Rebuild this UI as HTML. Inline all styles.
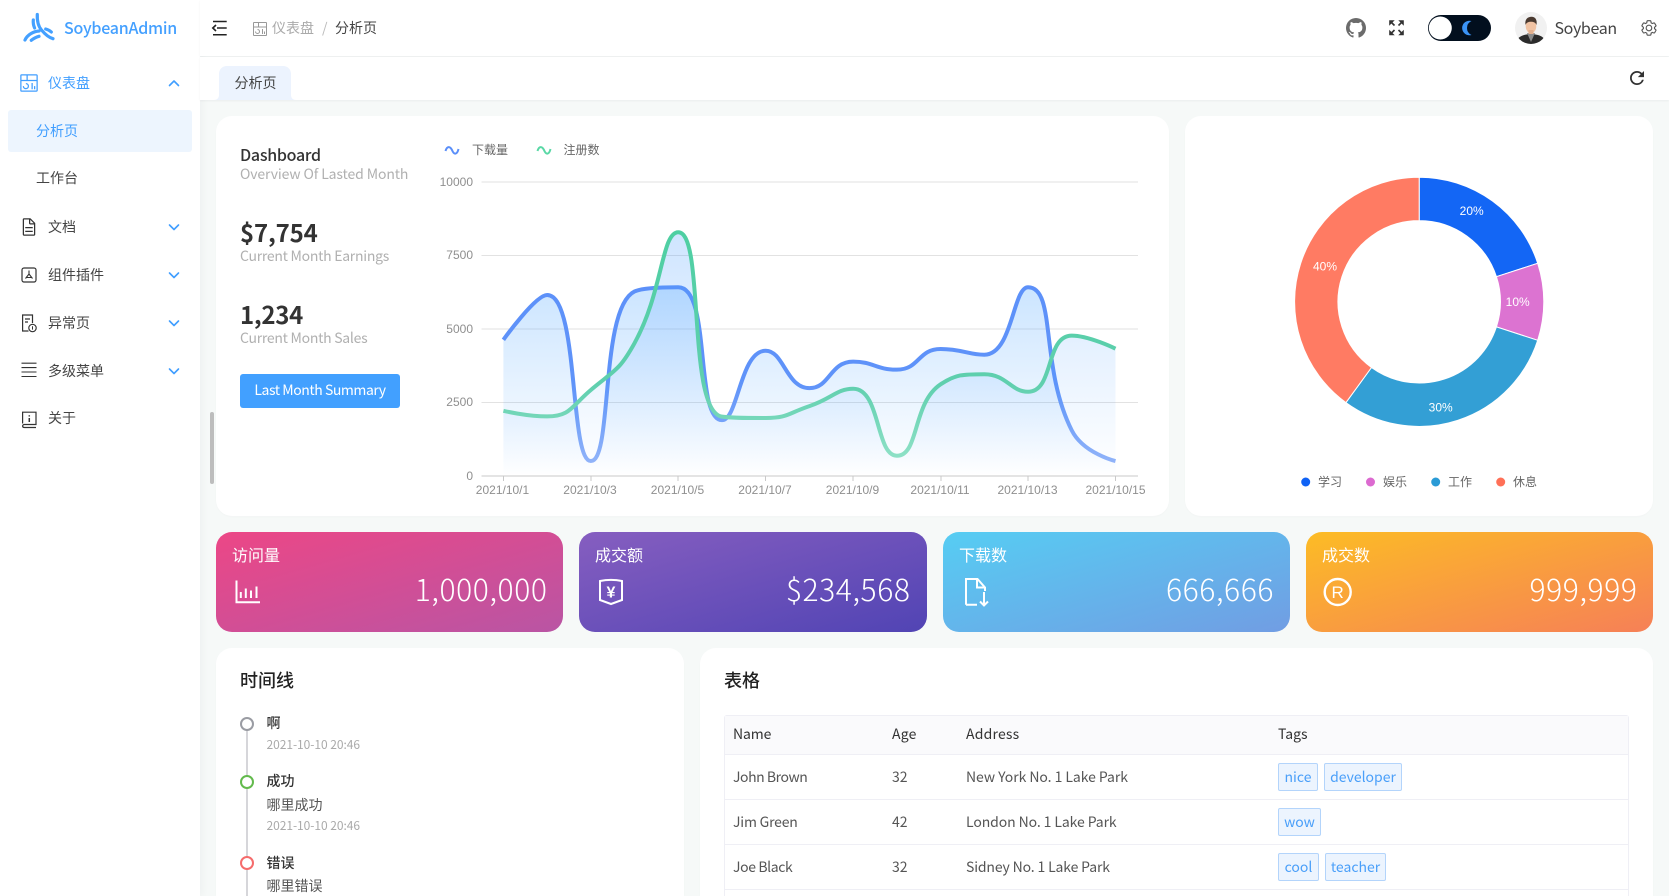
<!DOCTYPE html>
<html lang="zh">
<head>
<meta charset="utf-8">
<title>SoybeanAdmin</title>
<style>
html,body{margin:0;padding:0;width:1669px;height:896px;overflow:hidden;background:#f6f9f8}
body{font-family:"Noto Sans CJK SC","Liberation Sans",sans-serif;color:#333;font-size:14px;position:relative}
.b{position:absolute;box-sizing:border-box}
.t{position:absolute;white-space:nowrap;line-height:20px;height:20px}
.card{position:absolute;background:#fff;border-radius:16px;box-shadow:0 1px 2px rgba(0,0,0,.02)}
.stat{position:absolute;top:532px;height:100px;width:347.25px;border-radius:16px}
.sub{color:#b0b0b0}
.mi{color:#444}
.tag{position:absolute;box-sizing:border-box;height:28px;line-height:27px;text-align:center;background:#ecf4fe;border:1px solid #b3d4fb;border-radius:2px;color:#4a9ff9;font-size:14px}
svg.o{position:absolute;left:0;top:0;z-index:5}
.val{color:#fff;font-size:30px;font-weight:300;line-height:40px;height:40px;top:568px;letter-spacing:.6px}
.st{color:#fff;font-size:16px;top:544px}
.td{color:#555}
</style>
</head>
<body>
<!-- sidebar -->
<div class="b" style="left:0;top:0;width:200px;height:896px;background:#fff;box-shadow:2px 0 8px rgba(29,35,41,.04)"></div>
<div class="t" style="left:64px;top:17px;font-size:16px;font-weight:500;color:#44a0ff;letter-spacing:-.25px">SoybeanAdmin</div>
<div class="t" style="left:48px;top:73px;color:#409eff">仪表盘</div>
<div class="b" style="left:8px;top:110px;width:184px;height:42px;background:#edf5fe;border-radius:3px"></div>
<div class="t" style="left:36px;top:121px;color:#409eff">分析页</div>
<div class="t mi" style="left:36px;top:168px">工作台</div>
<div class="t mi" style="left:48px;top:217px">文档</div>
<div class="t mi" style="left:48px;top:265px">组件插件</div>
<div class="t mi" style="left:48px;top:313px">异常页</div>
<div class="t mi" style="left:48px;top:361px">多级菜单</div>
<div class="t mi" style="left:48px;top:408px">关于</div>
<div class="b" style="left:210px;top:412px;width:4px;height:72px;background:#bdbdbd;border-radius:2px;z-index:6"></div>

<!-- header -->
<div class="b" style="left:200px;top:0;width:1469px;height:56px;background:#fff;box-shadow:0 1px 2px rgba(0,21,41,.05)"></div>
<div class="t" style="left:272px;top:18px;color:#aaa">仪表盘</div>
<div class="t" style="left:322px;top:18px;color:#bbb">/</div>
<div class="t" style="left:335px;top:18px;color:#444">分析页</div>
<div class="t" style="left:1554.500px;top:17px;font-size:16px;color:#444;letter-spacing:-.36px">Soybean</div>

<!-- tabbar -->
<div class="b" style="left:200px;top:57px;width:1469px;height:43px;background:#fff;box-shadow:0 1px 2px rgba(0,21,41,.05)"></div>
<div class="t" style="left:234.500px;top:73px;color:#444;z-index:7">分析页</div>

<!-- main cards -->
<div class="card" style="left:216px;top:116px;width:953px;height:400px"></div>
<div class="card" style="left:1185px;top:116px;width:468px;height:400px"></div>
<div class="t" style="left:240px;top:144px;font-size:16px;font-weight:500;color:#333;letter-spacing:-.28px">Dashboard</div>
<div class="t sub" style="left:240px;top:164px;letter-spacing:-.12px">Overview Of Lasted Month</div>
<div class="t" style="left:240px;top:222px;font-size:24px;font-weight:700;color:#333;letter-spacing:-.17px">$7,754</div>
<div class="t sub" style="left:240px;top:246px;letter-spacing:-.27px">Current Month Earnings</div>
<div class="t" style="left:240px;top:304px;font-size:24px;font-weight:700;color:#333;letter-spacing:-.3px">1,234</div>
<div class="t sub" style="left:240px;top:328px;letter-spacing:-.27px">Current Month Sales</div>
<div class="b" style="left:240px;top:374px;width:160px;height:34px;background:#42a0ff;border-radius:3px;color:#fff;text-align:center;line-height:33px;letter-spacing:-.44px">Last Month Summary</div>

<!-- stat cards -->
<div class="stat" style="left:216px;background:linear-gradient(to bottom right,#ec4786,#b955a4)"></div>
<div class="stat" style="left:579.25px;background:linear-gradient(to bottom right,#865ec0,#5144b4)"></div>
<div class="stat" style="left:942.5px;background:linear-gradient(to bottom right,#56cdf3,#719de3)"></div>
<div class="stat" style="left:1305.75px;background:linear-gradient(to bottom right,#fcbc25,#f68057)"></div>
<div class="t st" style="left:232px">访问量</div>
<div class="t st" style="left:595px">成交额</div>
<div class="t st" style="left:959px">下载数</div>
<div class="t st" style="left:1322px">成交数</div>
<div class="t val" style="right:1121.500px">1,000,000</div>
<div class="t val" style="right:758.500px">$234,568</div>
<div class="t val" style="right:395px">666,666</div>
<div class="t val" style="right:31.500px">999,999</div>

<!-- timeline card -->
<div class="card" style="left:216px;top:648px;width:468px;height:248px;border-radius:16px 16px 0 0"></div>
<div class="t" style="left:240px;top:670px;font-size:18px;font-weight:500;color:#222">时间线</div>
<div class="b" style="left:246px;top:730px;width:2px;height:166px;background:#d6d6da"></div>
<div class="b" style="left:240px;top:717px;width:14px;height:14px;border-radius:50%;border:2px solid #9a9ca3;background:#fff"></div>
<div class="b" style="left:240px;top:775px;width:14px;height:14px;border-radius:50%;border:2px solid #63ba4d;background:#fff"></div>
<div class="b" style="left:240px;top:856px;width:14px;height:14px;border-radius:50%;border:2px solid #f56c6c;background:#fff"></div>
<div class="t" style="left:266.500px;top:713px;color:#333;font-weight:500">啊</div>
<div class="t" style="left:266.500px;top:735px;font-size:12px;color:#aaa;letter-spacing:-.05px">2021-10-10 20:46</div>
<div class="t" style="left:266.500px;top:771px;color:#333;font-weight:500">成功</div>
<div class="t" style="left:266.500px;top:795px;color:#555">哪里成功</div>
<div class="t" style="left:266.500px;top:816px;font-size:12px;color:#aaa;letter-spacing:-.05px">2021-10-10 20:46</div>
<div class="t" style="left:266.500px;top:853px;color:#333;font-weight:500">错误</div>
<div class="t" style="left:266.500px;top:876px;color:#555">哪里错误</div>

<!-- table card -->
<div class="card" style="left:700px;top:648px;width:953px;height:248px;border-radius:16px 16px 0 0"></div>
<div class="t" style="left:724px;top:670px;font-size:18px;font-weight:500;color:#222">表格</div>
<div class="b" style="left:724px;top:715px;width:905px;height:181px;border:1px solid #efeff5;border-bottom:0;border-radius:3px 3px 0 0"></div>
<div class="b" style="left:725px;top:716px;width:903px;height:38px;background:#fafafc"></div>
<div class="b" style="left:724px;top:754px;width:905px;height:1px;background:#efeff5"></div>
<div class="b" style="left:724px;top:799px;width:905px;height:1px;background:#efeff5"></div>
<div class="b" style="left:724px;top:844px;width:905px;height:1px;background:#efeff5"></div>
<div class="b" style="left:724px;top:889px;width:905px;height:1px;background:#efeff5"></div>
<div class="t" style="left:733px;top:724px;color:#333;letter-spacing:-.1px">Name</div>
<div class="t" style="left:892px;top:724px;color:#333;letter-spacing:.2px">Age</div>
<div class="t" style="left:966px;top:724px;color:#333;letter-spacing:.2px">Address</div>
<div class="t" style="left:1278px;top:724px;color:#333;letter-spacing:0">Tags</div>
<div class="t td" style="left:733px;top:767px;letter-spacing:-.45px">John Brown</div>
<div class="t td" style="left:892px;top:767px">32</div>
<div class="t td" style="left:966px;top:767px;letter-spacing:-.06px">New York No. 1 Lake Park</div>
<div class="t td" style="left:733px;top:812px;letter-spacing:-.2px">Jim Green</div>
<div class="t td" style="left:892px;top:812px">42</div>
<div class="t td" style="left:966px;top:812px;letter-spacing:-.1px">London No. 1 Lake Park</div>
<div class="t td" style="left:733px;top:857px;letter-spacing:-.38px">Joe Black</div>
<div class="t td" style="left:892px;top:857px">32</div>
<div class="t td" style="left:966px;top:857px;letter-spacing:-.15px">Sidney No. 1 Lake Park</div>
<div class="tag" style="left:1278px;top:763px;width:40px">nice</div>
<div class="tag" style="left:1324px;top:763px;width:78px">developer</div>
<div class="tag" style="left:1278px;top:808px;width:43px">wow</div>
<div class="tag" style="left:1278px;top:853px;width:41px">cool</div>
<div class="tag" style="left:1325px;top:853px;width:61px">teacher</div>

<!-- overlay svg: icons + charts -->
<svg class="o" width="1669" height="896" viewBox="0 0 1669 896" xmlns="http://www.w3.org/2000/svg">
<defs>
<clipPath id="chartclip"><rect x="430" y="130" width="715" height="380"/></clipPath>
<linearGradient id="a1" gradientUnits="userSpaceOnUse" x1="0" y1="287" x2="0" y2="476"><stop offset="0" stop-color="#409eff" stop-opacity=".27"/><stop offset="1" stop-color="#409eff" stop-opacity="0"/></linearGradient>
<linearGradient id="a2" gradientUnits="userSpaceOnUse" x1="0" y1="231" x2="0" y2="476"><stop offset="0" stop-color="#4b9dff" stop-opacity=".27"/><stop offset="1" stop-color="#4b9dff" stop-opacity="0"/></linearGradient>
<linearGradient id="l1" gradientUnits="userSpaceOnUse" x1="0" y1="232" x2="0" y2="476"><stop offset="0" stop-color="#5b8ff9"/><stop offset=".62" stop-color="#5f93f9"/><stop offset="1" stop-color="#9ab9f9"/></linearGradient>
<linearGradient id="l2" gradientUnits="userSpaceOnUse" x1="0" y1="232" x2="0" y2="476"><stop offset="0" stop-color="#4ecfa2"/><stop offset=".62" stop-color="#5fcfae"/><stop offset="1" stop-color="#99e5cc"/></linearGradient>
<clipPath id="av"><circle cx="1531" cy="28" r="16"/></clipPath>
</defs>

<!-- logo -->
<g fill="none" stroke="#44a0ff" stroke-width="3.2" stroke-linecap="round">
<path d="M37.300 14.500C37 21 38.500 26.500 41.500 30C44 33 48.500 37.500 53 38.700"/>
<path d="M39 31C33.500 31.500 27.500 34.500 25 40"/>
<path d="M33.300 20C33 23 33.500 25.500 34.600 28"/>
<path d="M45.700 29C47.500 29.500 49.700 30.500 51.300 32"/>
<path d="M31.300 40.300C33.500 38.500 36.500 37 39 36.300"/>
</g>

<!-- menu icons -->
<g fill="#409eff" transform="translate(19,73) scale(.625)"><path d="M24 21h2v5h-2zM20 16h2v10h-2zM11 26a5.006 5.006 0 0 1-5-5h2a3 3 0 1 0 3-3v-2a5 5 0 0 1 0 10z"/><path d="M28 2H4a2 2 0 0 0-2 2v24a2 2 0 0 0 2 2h24a2.003 2.003 0 0 0 2-2V4a2.002 2.002 0 0 0-2-2zm0 9H14V4h14zM12 4v7H4V4zM4 28V13h24l.002 15z"/></g>
<g fill="#999" transform="translate(252,21) scale(.5)"><path d="M24 21h2v5h-2zM20 16h2v10h-2zM11 26a5.006 5.006 0 0 1-5-5h2a3 3 0 1 0 3-3v-2a5 5 0 0 1 0 10z"/><path d="M28 2H4a2 2 0 0 0-2 2v24a2 2 0 0 0 2 2h24a2.003 2.003 0 0 0 2-2V4a2.002 2.002 0 0 0-2-2zm0 9H14V4h14zM12 4v7H4V4zM4 28V13h24l.002 15z"/></g>
<g fill="#333" transform="translate(19,217) scale(.625)"><path d="M25.700 9.300l-7-7A.908.908 0 0 0 18 2H8a2.006 2.006 0 0 0-2 2v24a2.006 2.006 0 0 0 2 2h16a2.006 2.006 0 0 0 2-2V10a.908.908 0 0 0-.3-.7zM18 4.400l5.600 5.600H18zM24 28H8V4h8v6a2.006 2.006 0 0 0 2 2h6z"/><path d="M10 22h12v2H10zM10 16h12v2H10z"/></g>
<g fill="none" stroke="#333" stroke-width="1.200">
<rect x="22" y="268" width="14" height="14" rx="2"/>
<path d="M29 270.500L29 274M29 274L25.500 278.500M29 274L32.500 278.500M26 277.500H32" stroke-width="1.100"/>
<path d="M32.500 323V315H22.600V331H28.500"/>
<path d="M25 319H30M25 322H28"/>
<circle cx="32.500" cy="328" r="3.700"/>
<path d="M32.500 326.300V329.600" stroke-width="1"/>
<path d="M21.500 363.200H36.500M21.500 367.600H36.500M21.500 372H36.500M21.500 376.500H36.500" stroke-width="1.100"/>
<path d="M22.600 423.500V412.200H36V424.500H24.400C23.400 424.500 22.600 425.200 22.600 426C22.600 427 23.400 427.500 24.400 427.500H36"/>
<path d="M29.300 415.300V416.500M29.300 418V422" stroke-width="1.500"/>
</g>
<g fill="none" stroke="#409eff" stroke-width="1.600" stroke-linecap="round" stroke-linejoin="round">
<path d="M169.500 85.500L174 81L178.500 85.500"/>
<path d="M169.500 225L174 229.500L178.500 225"/>
<path d="M169.500 273L174 277.500L178.500 273"/>
<path d="M169.500 321L174 325.500L178.500 321"/>
<path d="M169.500 369L174 373.500L178.500 369"/>
</g>

<!-- hamburger -->
<g stroke="#222" stroke-width="1.500" fill="none">
<path d="M213 21.500H226.700M217 28H226.700M213 34.700H226.700"/>
<path d="M216 25L212.800 28L216 31" stroke-width="1.600"/>
</g>

<!-- github -->
<path fill="#6b6b6b" transform="translate(1344,16)" d="M12 2A10 10 0 0 0 2 12c0 4.420 2.870 8.170 6.840 9.500c.5.080.66-.23.66-.5v-1.690c-2.770.6-3.360-1.340-3.360-1.340c-.46-1.160-1.110-1.470-1.110-1.470c-.91-.62.070-.6.070-.6c1 .07 1.530 1.030 1.530 1.030c.87 1.520 2.340 1.070 2.910.83c.09-.65.35-1.090.63-1.340c-2.220-.25-4.550-1.110-4.550-4.920c0-1.110.38-2 1.030-2.710c-.1-.25-.45-1.290.1-2.640c0 0 .84-.27 2.750 1.020c.79-.22 1.650-.33 2.500-.33c.85 0 1.710.11 2.500.33c1.910-1.290 2.750-1.020 2.750-1.020c.55 1.350.2 2.390.1 2.640c.65.71 1.030 1.600 1.030 2.710c0 3.820-2.340 4.660-4.570 4.910c.36.31.69.92.69 1.850V21c0 .27.16.59.67.5C19.140 20.160 22 16.420 22 12A10 10 0 0 0 12 2z"/>

<!-- fullscreen -->
<g fill="#333" stroke="#333" stroke-width=".6">
<path d="M1389.500 20.500H1394L1389.500 25Z"/><path d="M1391 22L1394.500 25.500" stroke-width="1.600"/>
<path d="M1403.500 20.500H1399L1403.500 25Z"/><path d="M1402 22L1398.500 25.500" stroke-width="1.600"/>
<path d="M1389.500 35H1394L1389.500 30.500Z"/><path d="M1391 33.500L1394.500 30" stroke-width="1.600"/>
<path d="M1403.500 35H1399L1403.500 30.500Z"/><path d="M1402 33.500L1398.500 30" stroke-width="1.600"/>
</g>

<!-- switch -->
<rect x="1428" y="15" width="63" height="26" rx="13" fill="#020f1e"/>
<circle cx="1440.300" cy="28" r="11.500" fill="#fff"/>
<path fill="#3b93f5" d="M1471.500 21A7.300 7.300 0 1 0 1471.500 35A7.700 7.700 0 0 1 1471.500 21Z"/>

<!-- avatar -->
<circle cx="1531" cy="28" r="16" fill="#f1f1f1"/>
<g clip-path="url(#av)">
<path d="M1515 46C1516 37 1522 34.500 1531 34C1540 34.500 1546 37 1547 46Z" fill="#2b2b2b"/>
<path d="M1527 33L1531 42L1535 33Z" fill="#8b8b8b"/>
<ellipse cx="1531" cy="26" rx="5.300" ry="7.200" fill="#f1c3a3"/>
<rect x="1528.500" y="30" width="5" height="4" fill="#e3b08e"/>
<path d="M1525.500 25C1524.500 19 1528 16.800 1531.500 16.800C1535 16.800 1537.500 19.500 1536.500 25C1535.500 22.500 1533.500 21.800 1531 21.800C1528.500 21.800 1526.500 22.500 1525.500 25Z" fill="#4a3a30"/>
</g>

<!-- gear -->
<g fill="#555" transform="translate(1640,19) scale(.56)"><path d="M27 16.760v-1.530l1.920-1.680A2 2 0 0 0 29.300 11l-2.360-4a2 2 0 0 0-1.730-1a2 2 0 0 0-.64.1l-2.430.82a11.350 11.350 0 0 0-1.310-.75l-.51-2.520a2 2 0 0 0-2-1.610h-4.680a2 2 0 0 0-2 1.610l-.51 2.520a11.480 11.480 0 0 0-1.320.75l-2.380-.86A2 2 0 0 0 6.790 6a2 2 0 0 0-1.730 1L2.700 11a2 2 0 0 0 .41 2.510L5 15.240v1.530l-1.890 1.680A2 2 0 0 0 2.700 21l2.360 4a2 2 0 0 0 1.730 1a2 2 0 0 0 .64-.1l2.430-.82a11.350 11.350 0 0 0 1.310.75l.51 2.520a2 2 0 0 0 2 1.610h4.720a2 2 0 0 0 2-1.610l.51-2.520a11.480 11.480 0 0 0 1.320-.75l2.420.82a2 2 0 0 0 .64.1a2 2 0 0 0 1.730-1l2.280-4a2 2 0 0 0-.41-2.510zM25.210 24l-3.430-1.160a8.860 8.860 0 0 1-2.710 1.570L18.360 28h-4.720l-.71-3.550a9.360 9.360 0 0 1-2.700-1.570L6.790 24l-2.360-4l2.720-2.400a8.900 8.900 0 0 1 0-3.130L4.430 12l2.360-4l3.430 1.160a8.860 8.860 0 0 1 2.710-1.570L13.640 4h4.720l.71 3.550a9.360 9.360 0 0 1 2.700 1.570L25.210 8l2.360 4l-2.720 2.400a8.900 8.900 0 0 1 0 3.130L27.570 20z"/><path d="M16 22a6 6 0 1 1 6-6a5.940 5.940 0 0 1-6 6zm0-10a3.910 3.910 0 0 0-4 4a3.910 3.910 0 0 0 4 4a3.910 3.910 0 0 0 4-4a3.910 3.910 0 0 0-4-4z"/></g>

<!-- refresh -->
<path fill="#333" transform="translate(1626.500,67.500) scale(.875)" d="M17.650 6.350A7.958 7.958 0 0 0 12 4a8 8 0 0 0-8 8a8 8 0 0 0 8 8c3.730 0 6.840-2.550 7.730-6h-2.080A5.990 5.990 0 0 1 12 18a6 6 0 0 1-6-6a6 6 0 0 1 6-6c1.660 0 3.140.69 4.220 1.780L13 11h7V4l-2.350 2.350z"/>

<!-- tab shape -->
<path fill="#ecf3fe" d="M214 100C217 100 219 98 219 95V74C219 69.500 222 66 227 66H283C288 66 291 69.500 291 74V95C291 98 293 100 296 100Z"/>

<!-- line chart -->
<g stroke="#e2e2e2" stroke-width="1">
<path d="M481.500 182H1138M481.500 255.500H1138M481.500 329H1138M481.500 402.500H1138"/>
</g>
<path d="M481.500 476H1138" stroke="#c9c9c9" stroke-width="1"/>
<g stroke="#c9c9c9" stroke-width="1">
<path d="M503.500 476v5M591 476v5M678 476v5M765.500 476v5M853 476v5M941 476v5M1028 476v5M1115.500 476v5"/>
</g>
<g font-family="'Liberation Sans',sans-serif" font-size="12" fill="#8f8f8f">
<g text-anchor="end">
<text x="473" y="186">10000</text>
<text x="473" y="259">7500</text>
<text x="473" y="333">5000</text>
<text x="473" y="406">2500</text>
<text x="473" y="480">0</text>
</g>
<g text-anchor="middle" clip-path="url(#chartclip)">
<text x="502.500" y="494">2021/10/1</text>
<text x="590" y="494">2021/10/3</text>
<text x="677.500" y="494">2021/10/5</text>
<text x="765" y="494">2021/10/7</text>
<text x="852.500" y="494">2021/10/9</text>
<text x="940" y="494">2021/10/11</text>
<text x="1027.500" y="494">2021/10/13</text>
<text x="1115.500" y="494">2021/10/15</text>
</g>
</g>
<path id="area1" fill="url(#a1)"/>
<path id="line1" fill="none" stroke="url(#l1)" stroke-width="4" stroke-linejoin="round"/>
<path id="area2" fill="url(#a2)"/>
<path id="line2" fill="none" stroke="url(#l2)" stroke-width="4" stroke-linejoin="round"/>

<!-- chart legend -->
<path d="M445.500 151C447 146 450 146 452 150C454 155 457 155 458.500 149" fill="none" stroke="#5b8ff9" stroke-width="2"/>
<path d="M537.500 151C539 146 542 146 544 150C546 155 549 155 550.500 149" fill="none" stroke="#5ad8a6" stroke-width="2"/>
<g font-family="'Noto Sans CJK SC','Liberation Sans',sans-serif" font-size="12" fill="#666">
<text x="472" y="154">下载量</text>
<text x="563.500" y="154">注册数</text>
</g>

<!-- donut -->
<g stroke="#fff" stroke-width="1">
<path fill="#1366f5" d="M1419.200 177.200A124.600 124.600 0 0 1 1537.700 263.300L1496.430 276.710A81.200 81.200 0 0 0 1419.200 220.600Z"/>
<path fill="#dc73d1" d="M1537.700 263.300A124.600 124.600 0 0 1 1537.700 340.300L1496.430 326.890A81.200 81.200 0 0 0 1496.430 276.710Z"/>
<path fill="#339fd5" d="M1537.700 340.300A124.600 124.600 0 0 1 1345.960 402.600L1371.470 367.490A81.200 81.200 0 0 0 1496.430 326.890Z"/>
<path fill="#ff7b63" d="M1345.960 402.600A124.600 124.600 0 0 1 1419.200 177.200L1419.200 220.600A81.200 81.200 0 0 0 1371.470 367.490Z"/>
</g>
<g font-family="'Liberation Sans',sans-serif" font-size="12" fill="#fff" text-anchor="middle">
<text x="1471.700" y="215">20%</text>
<text x="1517.700" y="306">10%</text>
<text x="1440.700" y="411.500">30%</text>
<text x="1325" y="270.500">40%</text>
</g>
<circle cx="1305.700" cy="482" r="4.500" fill="#0f62f5"/>
<circle cx="1370.500" cy="482" r="4.500" fill="#dc6ad0"/>
<circle cx="1435.700" cy="482" r="4.500" fill="#2a9bd6"/>
<circle cx="1500.700" cy="482" r="4.500" fill="#ff7057"/>
<g font-family="'Noto Sans CJK SC','Liberation Sans',sans-serif" font-size="12" fill="#666">
<text x="1318" y="486">学习</text>
<text x="1383" y="486">娱乐</text>
<text x="1448" y="486">工作</text>
<text x="1513" y="486">休息</text>
</g>

<!-- stat icons -->
<g fill="none" stroke="#fff" stroke-width="2">
<path d="M236.500 580.500V602.300H260"/>
<path d="M240.800 598V592M245.800 598V588.500M251 598V590.500M256.500 598V586.500" stroke-width="2"/>
<path d="M600 581C607 579.500 615 579.500 622 581V600L611 604L600 600Z" stroke-width="2"/>
<path d="M966 604.800V579H977.500L985 587.500V591M977 579V587.500H985M966 604.800H977" stroke-width="2"/>
<path d="M984 592V605M980 601.500L984 605.500L988 601.500" stroke-width="2"/>
<circle cx="1337.700" cy="592" r="13" stroke-width="2.400"/>
</g>
<g font-family="'Liberation Sans',sans-serif" fill="#fff" text-anchor="middle">
<text x="611" y="597.500" font-size="16" font-weight="700">¥</text>
<text x="1337.700" y="598" font-size="17">R</text>
</g>
</svg>

<script>
(function(){
var ds=[[4623,6145,498,6268,6411,1890,4251,2978,3880,3606,4311,4116,6411,1543,498],
        [2208,2016,2916,4512,8281,2008,1963,2367,2956,678,3108,3452,2856,4765,4319]];
var X0=503.4,DX=43.72,Y0=475.7,K=0.02940,S=0.5;
function build(d){
  var p=d.map(function(v,i){return [X0+i*DX,Y0-v*K]});
  var n=p.length,s='M'+p[0][0].toFixed(2)+' '+p[0][1].toFixed(2);
  var cx0=p[0][0],cy0=p[0][1];
  for(var i=1;i<n;i++){
    var x=p[i][0],y=p[i][1],px=p[i-1][0],py=p[i-1][1];
    var nx=i+1<n?p[i+1][0]:x,ny=i+1<n?p[i+1][1]:y;
    var cx1,cy1,ncx,ncy;
    if(i+1<n){
      var vx=nx-px,vy=ny-py;
      var dx0=x-px,dx1=nx-x,dy0=y-py,dy1=ny-y;
      var l0=Math.sqrt(dx0*dx0+dy0*dy0),l1=Math.sqrt(dx1*dx1+dy1*dy1);
      var r=l1/(l1+l0);
      ncx=x+vx*S*r;ncy=y+vy*S*r;
      ncx=Math.min(ncx,Math.max(nx,x));ncy=Math.min(ncy,Math.max(ny,y));
      ncx=Math.max(ncx,Math.min(nx,x));ncy=Math.max(ncy,Math.min(ny,y));
      vx=ncx-x;vy=ncy-y;
      cx1=x-vx*l0/l1;cy1=y-vy*l0/l1;
      cx1=Math.min(cx1,Math.max(px,x));cy1=Math.min(cy1,Math.max(py,y));
      cx1=Math.max(cx1,Math.min(px,x));cy1=Math.max(cy1,Math.min(py,y));
      vx=x-cx1;vy=y-cy1;
      ncx=x+vx*l1/l0;ncy=y+vy*l1/l0;
    }else{cx1=x;cy1=y;ncx=x;ncy=y}
    s+='C'+cx0.toFixed(2)+' '+cy0.toFixed(2)+' '+cx1.toFixed(2)+' '+cy1.toFixed(2)+' '+x.toFixed(2)+' '+y.toFixed(2);
    cx0=ncx;cy0=ncy;
  }
  return {line:s,area:s+'L'+p[n-1][0].toFixed(2)+' '+Y0+'L'+p[0][0].toFixed(2)+' '+Y0+'Z'};
}
for(var k=0;k<2;k++){
  var b=build(ds[k]);
  document.getElementById('line'+(k+1)).setAttribute('d',b.line);
  document.getElementById('area'+(k+1)).setAttribute('d',b.area);
}
})();
</script>
</body>
</html>
